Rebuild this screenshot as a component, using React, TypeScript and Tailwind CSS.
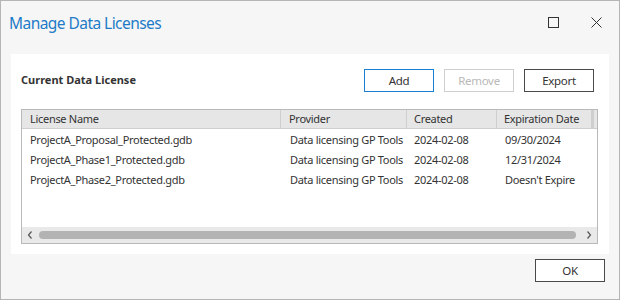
import React from "react";

const ROWS = [
  {
    name: "ProjectA_Proposal_Protected.gdb",
    provider: "Data licensing GP Tools",
    created: "2024-02-08",
    expires: "09/30/2024",
  },
  {
    name: "ProjectA_Phase1_Protected.gdb",
    provider: "Data licensing GP Tools",
    created: "2024-02-08",
    expires: "12/31/2024",
  },
  {
    name: "ProjectA_Phase2_Protected.gdb",
    provider: "Data licensing GP Tools",
    created: "2024-02-08",
    expires: "Doesn't Expire",
  },
];

function Button({
  children,
  variant = "default",
}: {
  children: React.ReactNode;
  variant?: "default" | "primary" | "disabled";
}) {
  const styles =
    variant === "primary"
      ? "border-[#1a7fd1] text-[#333]"
      : variant === "disabled"
      ? "border-[#cfcfcf] text-[#b9b9b9]"
      : "border-[#4a4a4a] text-[#333]";
  return (
    <button
      className={`w-[70px] h-[23px] border bg-white text-[11.5px] tracking-[-0.3px] leading-none ${styles}`}
    >
      {children}
    </button>
  );
}

export default function App() {
  return (
    <div
      className="w-[620px] h-[300px] border border-[#b5b5b5] bg-[#f5f6f5] flex flex-col text-[#333]"
      style={{ fontFamily: '"Noto Sans", "Open Sans", sans-serif' }}
    >
      {/* title bar */}
      <div className="h-[53px] flex items-start">
        <h1 className="pl-[8px] pt-[11px] text-[15.5px] tracking-[-0.55px] font-normal text-[#1e7bc8] leading-[22px]">
          Manage Data Licenses
        </h1>
        <div className="ml-auto flex items-center gap-[32px] pt-[16px] pr-[17px]">
          <svg width="11" height="11" viewBox="0 0 11 11">
            <rect x="0.5" y="0.5" width="10" height="10" fill="none" stroke="#333" />
          </svg>
          <svg width="11" height="11" viewBox="0 0 11 11">
            <path d="M0.5 0.5 L10.5 10.5 M10.5 0.5 L0.5 10.5" stroke="#333" strokeWidth="1" />
          </svg>
        </div>
      </div>

      {/* main panel */}
      <div className="mx-[10px] h-[200px] bg-white flex flex-col pl-[10px] pr-[11px] pt-[15px] pb-[10px]">
        <div className="flex items-center h-[23px] pr-[4px]">
          <span className="text-[11px] font-bold text-[#333]">Current Data License</span>
          <div className="ml-auto flex gap-[10px]">
            <Button variant="primary">Add</Button>
            <Button variant="disabled">Remove</Button>
            <Button>Export</Button>
          </div>
        </div>

        <div className="mt-[17px] flex-1 border border-[#b9b9b9] flex flex-col text-[11px] tracking-[-0.3px]">
          <div className="flex h-[19px] bg-[#e6e6e6] border-b border-[#cfcfcf] items-center">
            <div className="w-[259px] pl-[8px] border-r border-[#cfcfcf] h-full flex items-center">License Name</div>
            <div className="w-[126px] pl-[8px] border-r border-[#cfcfcf] h-full flex items-center">Provider</div>
            <div className="w-[90px] pl-[7px] border-r border-[#cfcfcf] h-full flex items-center">Created</div>
            <div className="w-[97px] pl-[7px] border-r-[3px] border-[#cfcfcf] h-full flex items-center">Expiration Date</div>
            <div className="flex-1" />
          </div>
          <div className="flex-1 flex flex-col pt-[1px]">
            {ROWS.map((r) => (
              <div key={r.name} className="flex h-[20px] items-center">
                <div className="w-[259px] pl-[8px] whitespace-nowrap">{r.name}</div>
                <div className="w-[126px] pl-[9px] whitespace-nowrap">{r.provider}</div>
                <div className="w-[90px] pl-[7px] whitespace-nowrap">{r.created}</div>
                <div className="w-[97px] pl-[8px] whitespace-nowrap">{r.expires}</div>
              </div>
            ))}
          </div>
          <div className="h-[16px] bg-[#e9e9e9] flex items-center px-[5px] gap-[6px]">
            <svg width="6" height="8" viewBox="0 0 6 8">
              <path d="M4.5 0.5 L1.5 4 L4.5 7.5" fill="none" stroke="#555" strokeWidth="1.2" />
            </svg>
            <div className="flex-1 h-[8px] rounded-full bg-[#b3b3b3] mr-[4px]" />
            <svg width="6" height="8" viewBox="0 0 6 8">
              <path d="M1.5 0.5 L4.5 4 L1.5 7.5" fill="none" stroke="#555" strokeWidth="1.2" />
            </svg>
          </div>
        </div>
      </div>

      {/* footer */}
      <div className="flex justify-end pt-[5px] pr-[14px]">
        <Button>OK</Button>
      </div>
    </div>
  );
}
